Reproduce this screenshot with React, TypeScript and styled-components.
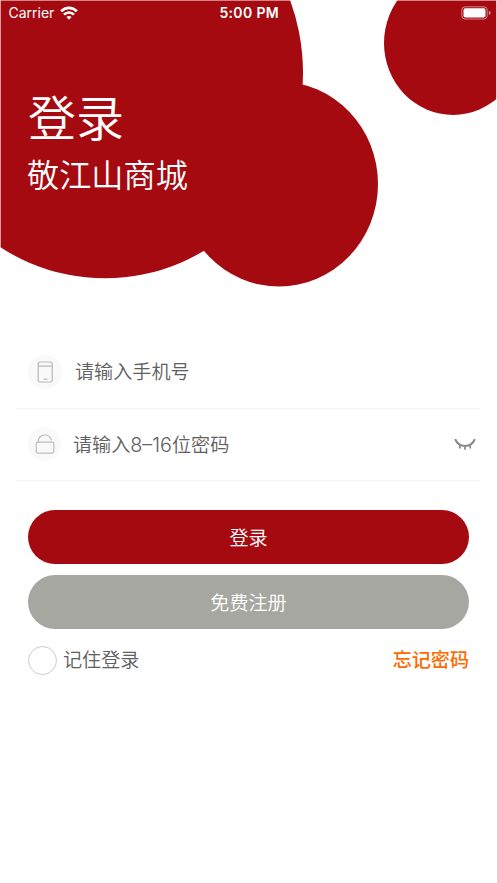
import React from "react";
import styled, { createGlobalStyle } from "styled-components";

const GlobalStyle = createGlobalStyle`
  * { box-sizing: border-box; }
  body { margin: 0; background: #fff; }
  button, input { font: inherit; }
`;

const Screen = styled.main`
  width: 497px;
  height: 883px;
  overflow: hidden;
  background: #fff;
  color: #606060;
  font-family: Inter, "Noto Sans CJK SC", sans-serif;
  font-size: 19.1px;
  font-weight: 350;
`;

const Hero = styled.header`
  position: relative;
  height: 336px;
  color: #fff;
`;

const Bubbles = styled.svg`
  position: absolute;
  inset: 0;
  display: block;
`;

const StatusBar = styled.div`
  position: relative;
  display: grid;
  grid-template-columns: 1fr auto 1fr;
  align-items: center;
  height: 25px;
  padding: 0 6px 0 8.5px;
  font-size: 14px;
`;

const Carrier = styled.span`
  display: flex;
  align-items: center;
  gap: 6px;
  font-weight: 400;
  letter-spacing: 0;
`;

const Clock = styled.time`
  margin-right: 1px;
  font-weight: 600;
  letter-spacing: 0.35px;
`;

const Battery = styled.svg`
  justify-self: end;
  display: block;
`;

const Title = styled.h1`
  position: relative;
  margin: 59px 0 0 28px;
  font-size: 48px;
  line-height: 70px;
  font-weight: 350;
`;

const Subtitle = styled.p`
  position: relative;
  margin: -2px 0 0 27px;
  font-size: 32.2px;
  line-height: 48px;
  font-weight: 350;
`;

const Fields = styled.div`
  margin: 0 16px;
`;

const Field = styled.label<{ $gap: number }>`
  display: flex;
  align-items: center;
  gap: ${(p) => p.$gap}px;
  height: 72.5px;
  padding: 0 5px 0 12px;
  border-bottom: 1px solid #f4f4f4;
`;

const FieldIcon = styled.span<{ $size: number }>`
  display: grid;
  place-items: center;
  width: ${(p) => p.$size}px;
  height: 34px;
  border-radius: 50%;
  background: #f9f9f9;
`;

const Placeholder = styled.span`
  flex: 1;
  padding-top: 1px;
  line-height: 28px;
`;

const Digits = styled.span`
  font-size: 19.8px;
`;

const Actions = styled.div`
  display: grid;
  gap: 11px;
  margin: 29px 28px 0;
`;

const Pill = styled.button<{ $tone: string }>`
  height: 54px;
  padding: 0 0 1px;
  border: 0;
  border-radius: 27px;
  background: ${(p) => p.$tone};
  color: #fff;
`;

const Options = styled.div`
  display: flex;
  align-items: center;
  justify-content: space-between;
  height: 30px;
  margin: 16px 28px 0;
`;

const Remember = styled.label`
  display: flex;
  align-items: center;
  gap: 6px;
`;

const Radio = styled.span`
  width: 29px;
  height: 29px;
  border: 1px solid #ccc;
  border-radius: 50%;
`;

const OptionText = styled.span`
  line-height: 28px;
`;

const Forgot = styled.a`
  color: #ff6a00;
  font-weight: 500;
  line-height: 28px;
`;

const WifiIcon = () => (
  <svg width="18" height="14" viewBox="0 0 19 14" fill="none" stroke="#fff" strokeWidth="2.8">
    <path d="M1.2 5.2C6 .35 13 .35 17.8 5.2" />
    <path d="M4.2 8.7C7.2 5.7 11.8 5.7 14.8 8.7" />
    <path d="M9.5 14 6.8 11.3Q9.5 9.1 12.2 11.3Z" fill="#fff" stroke="none" />
  </svg>
);

const PhoneIcon = () => (
  <svg width="16" height="22" viewBox="0 0 16 22" fill="none" stroke="#b8b8b8" strokeWidth="1.2">
    <rect x="1.2" y="1" width="14" height="20" rx="1.5" />
    <path d="M1.2 5.2h14M6.5 18.2h4" />
  </svg>
);

const LockIcon = () => (
  <svg width="20" height="20" viewBox="0 0 20 20" fill="none" stroke="#bdbdbd" strokeWidth="1.2">
    <rect x="1.2" y="8.2" width="17.6" height="11" rx="1.8" />
    <path d="M3.2 8.2C3.2 3.5 6 1 9.8 1c3.3 0 5.8 2 6.7 5.4" />
  </svg>
);

const ClosedEyeIcon = () => (
  <svg width="22" height="13" viewBox="0 0 22 13" fill="none" stroke="#888">
    <path d="M1.2 1.2C2.8 5.5 6.5 8 11 8s8.2-2.5 9.8-6.8" strokeWidth="2" />
    <path d="M5.8 7.3v3.1M11 8v3.8M16.2 7.3v3.1" strokeWidth="1.7" />
  </svg>
);

export default function App() {
  return (
    <Screen>
      <GlobalStyle />
      <Hero>
        <Bubbles width="497" height="336" viewBox="0 0 497 336" fill="#a50a11">
          <clipPath id="hero-edge">
            <rect x="0.6" y="0.6" width="495.6" height="335" />
          </clipPath>
          <g clipPath="url(#hero-edge)">
            <ellipse cx="105" cy="73" rx="198" ry="205.3" />
            <ellipse cx="279" cy="184" rx="99" ry="102.5" />
            <ellipse cx="453" cy="43" rx="69" ry="72" />
          </g>
        </Bubbles>
        <StatusBar>
          <Carrier>
            Carrier
            <WifiIcon />
          </Carrier>
          <Clock>5:00 PM</Clock>
          <Battery width="30" height="14" viewBox="0 0 30 14">
            <rect x=".8" y=".8" width="25.4" height="12.2" rx="3.2" fill="none" stroke="#fff" strokeOpacity=".5" />
            <rect x="2.5" y="2.3" width="22" height="9.2" rx="1.8" fill="#fff" />
            <path d="M27.8 4.8q2 .6 2 2.1t-2 2.1z" fill="#fff" fillOpacity=".5" />
          </Battery>
        </StatusBar>
        <Title>登录</Title>
        <Subtitle>敬江山商城</Subtitle>
      </Hero>
      <Fields>
        <Field $gap={13}>
          <FieldIcon $size={34}><PhoneIcon /></FieldIcon>
          <Placeholder>请输入手机号</Placeholder>
        </Field>
        <Field $gap={12}>
          <FieldIcon $size={33}><LockIcon /></FieldIcon>
          <Placeholder>请输入<Digits>8–16</Digits>位密码</Placeholder>
          <ClosedEyeIcon />
        </Field>
      </Fields>
      <Actions>
        <Pill $tone="#a50a11">登录</Pill>
        <Pill $tone="#a7a7a1">免费注册</Pill>
      </Actions>
      <Options>
        <Remember>
          <Radio />
          <OptionText>记住登录</OptionText>
        </Remember>
        <Forgot>忘记密码</Forgot>
      </Options>
    </Screen>
  );
}
